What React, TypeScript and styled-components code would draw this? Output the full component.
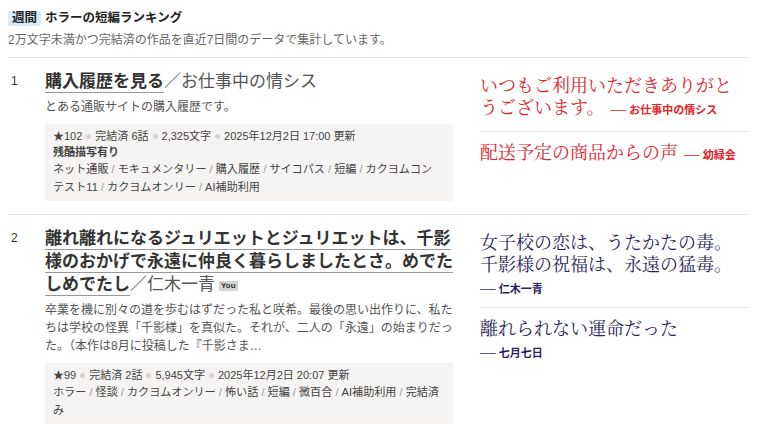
import React from "react";
import styled, { createGlobalStyle } from "styled-components";

const GlobalStyle = createGlobalStyle`
  html, body { margin: 0; padding: 0; background: #ffffff; }
  body {
    font-family: "Liberation Sans", "Noto Sans CJK JP", "Noto Sans", sans-serif;
    color: #333;
  }
`;

const Page = styled.div`
  width: 762px;
  box-sizing: border-box;
  padding: 10px 14px 0 8px;
`;

const Header = styled.header`
  display: flex;
  flex-direction: column;
  gap: 5px;
  padding-bottom: 8px;
`;

const TitleRow = styled.div`
  display: flex;
  align-items: center;
  gap: 4px;
`;

const Badge = styled.span`
  background: #d9e9f7;
  color: #222;
  font-weight: bold;
  font-size: 12.5px;
  line-height: 15px;
  padding: 0 4px;
  border-radius: 2px;
`;

const Heading = styled.h1`
  margin: 0;
  font-size: 12.5px;
  font-weight: bold;
  color: #222;
  line-height: 16px;
`;

const Sub = styled.p`
  margin: 0;
  font-size: 12px;
  line-height: 18px;
  color: #666;
`;

const Item = styled.section`
  display: grid;
  grid-template-columns: 37px 408px 1fr;
  column-gap: 0;
  border-top: 1px solid #e2e2e2;
  padding: 12px 0 13px;
`;

const Rank = styled.div`
  padding-left: 3px;
  font-size: 12px;
  line-height: 23px;
  color: #333;
`;

const Main = styled.div`
  display: flex;
  flex-direction: column;
`;

const Title = styled.h2`
  margin: 0;
  font-size: 17px;
  line-height: 23px;
  font-weight: normal;
  color: #555;
`;

const TitleLink = styled.span`
  font-weight: bold;
  color: #333;
  text-decoration: underline;
  text-decoration-color: #999;
  text-decoration-thickness: 1px;
  text-underline-offset: 5px;
`;

const YouBadge = styled.span`
  display: inline-block;
  vertical-align: 2px;
  margin-left: 4px;
  background: #d4d4d4;
  color: #333;
  font-size: 8px;
  font-weight: bold;
  line-height: 10px;
  padding: 0 2px;
  border-radius: 1px;
`;

const Desc = styled.p`
  margin: 5px 0 0;
  font-size: 12px;
  line-height: 18px;
  color: #555;
`;

const MetaBox = styled.div`
  margin-top: 8px;
  background: #f5f4f2;
  padding: 4px 12px 5px 8px;
  color: #444;
`;

const MetaLine = styled.div`
  font-size: 11px;
  line-height: 16px;
  display: flex;
  align-items: center;
  flex-wrap: wrap;
`;

const Dot = styled.span`
  display: inline-block;
  width: 5px;
  height: 5px;
  border-radius: 50%;
  background: #d6d6d6;
  margin: 0 4px;
`;

const Warn = styled.div`
  font-size: 11px;
  line-height: 16px;
  font-weight: bold;
  color: #444;
`;

const Tags = styled.div`
  font-size: 11.1px;
  line-height: 18px;
  color: #444;
`;

const Slash = styled.span`
  color: #999;
`;

const Reviews = styled.div`
  margin-left: 27px;
  padding-top: 3px;
  display: flex;
  flex-direction: column;
`;

const Review = styled.div<{ $color: string; $first?: boolean }>`
  font-family: "Noto Serif CJK JP", "IPAexMincho", "Liberation Serif", serif;
  font-size: 18px;
  line-height: 22px;
  color: ${(p) => p.$color};
  padding: ${(p) => (p.$first ? "0 0 10px" : "8px 0 10px")};
  border-top: ${(p) => (p.$first ? "none" : "1px solid #e6e6e6")};
`;

const By = styled.span`
  font-family: "Liberation Sans", "Noto Sans CJK JP", sans-serif;
  font-size: 11px;
  font-weight: bold;
  white-space: nowrap;
  margin-left: 6px;
`;

const ByLine = styled.span`
  font-family: "Liberation Sans", "Noto Sans CJK JP", sans-serif;
  font-size: 11px;
  font-weight: bold;
  white-space: nowrap;
  display: inline-block;
  line-height: 16px;
`;

type Rev = { text: React.ReactNode; by: string; block?: boolean };

const Dash = () => <span>──</span>;

const ReviewList: React.FC<{ color: string; items: Rev[] }> = ({ color, items }) => (
  <Reviews>
    {items.map((r, i) => (
      <Review key={i} $color={color} $first={i === 0}>
        {r.text}
        {r.block ? (
          <>
            <br />
            <ByLine>
              <Dash /> {r.by}
            </ByLine>
          </>
        ) : (
          <By>
            <Dash /> {r.by}
          </By>
        )}
      </Review>
    ))}
  </Reviews>
);

const TagList: React.FC<{ tags: string[] }> = ({ tags }) => (
  <Tags>
    {tags.map((t, i) => (
      <React.Fragment key={i}>
        {i > 0 && <Slash> / </Slash>}
        {t}
      </React.Fragment>
    ))}
  </Tags>
);

export default function App() {
  return (
    <Page>
      <GlobalStyle />
      <Header>
        <TitleRow>
          <Badge>週間</Badge>
          <Heading>ホラーの短編ランキング</Heading>
        </TitleRow>
        <Sub>2万文字未満かつ完結済の作品を直近7日間のデータで集計しています。</Sub>
      </Header>

      <Item>
        <Rank>1</Rank>
        <Main>
          <Title>
            <TitleLink>購入履歴を見る</TitleLink>／お仕事中の情シス
          </Title>
          <Desc>とある通販サイトの購入履歴です。</Desc>
          <MetaBox>
            <MetaLine>
              ★102<Dot />完結済 6話<Dot />2,325文字<Dot />2025年12月2日 17:00 更新
            </MetaLine>
            <Warn>残酷描写有り</Warn>
            <TagList
              tags={[
                "ネット通販",
                "モキュメンタリー",
                "購入履歴",
                "サイコパス",
                "短編",
                "カクヨムコンテスト11",
                "カクヨムオンリー",
                "AI補助利用",
              ]}
            />
          </MetaBox>
        </Main>
        <ReviewList
          color="#e2232a"
          items={[
            { text: "いつもご利用いただきありがとうございます。", by: "お仕事中の情シス" },
            { text: "配送予定の商品からの声", by: "幼緑会" },
          ]}
        />
      </Item>

      <Item>
        <Rank>2</Rank>
        <Main>
          <Title>
            <TitleLink>
              離れ離れになるジュリエットとジュリエットは、千影様のおかげで永遠に仲良く暮らしましたとさ。めでたしめでたし
            </TitleLink>
            ／仁木一青<YouBadge>You</YouBadge>
          </Title>
          <Desc>
            卒業を機に別々の道を歩むはずだった私と咲希。最後の思い出作りに、私たちは学校の怪異「千影様」を真似た。それが、二人の「永遠」の始まりだった。（本作は8月に投稿した『千影さま…
          </Desc>
          <MetaBox>
            <MetaLine>
              ★99<Dot />完結済 2話<Dot />5,945文字<Dot />2025年12月2日 20:07 更新
            </MetaLine>
            <TagList
              tags={[
                "ホラー",
                "怪談",
                "カクヨムオンリー",
                "怖い話",
                "短編",
                "微百合",
                "AI補助利用",
                "完結済み",
              ]}
            />
          </MetaBox>
        </Main>
        <ReviewList
          color="#2c1f5c"
          items={[
            {
              text: (
                <>
                  女子校の恋は、うたかたの毒。
                  <br />
                  千影様の祝福は、永遠の猛毒。
                </>
              ),
              by: "仁木一青",
              block: true,
            },
            { text: "離れられない運命だった", by: "七月七日", block: true },
          ]}
        />
      </Item>
    </Page>
  );
}
